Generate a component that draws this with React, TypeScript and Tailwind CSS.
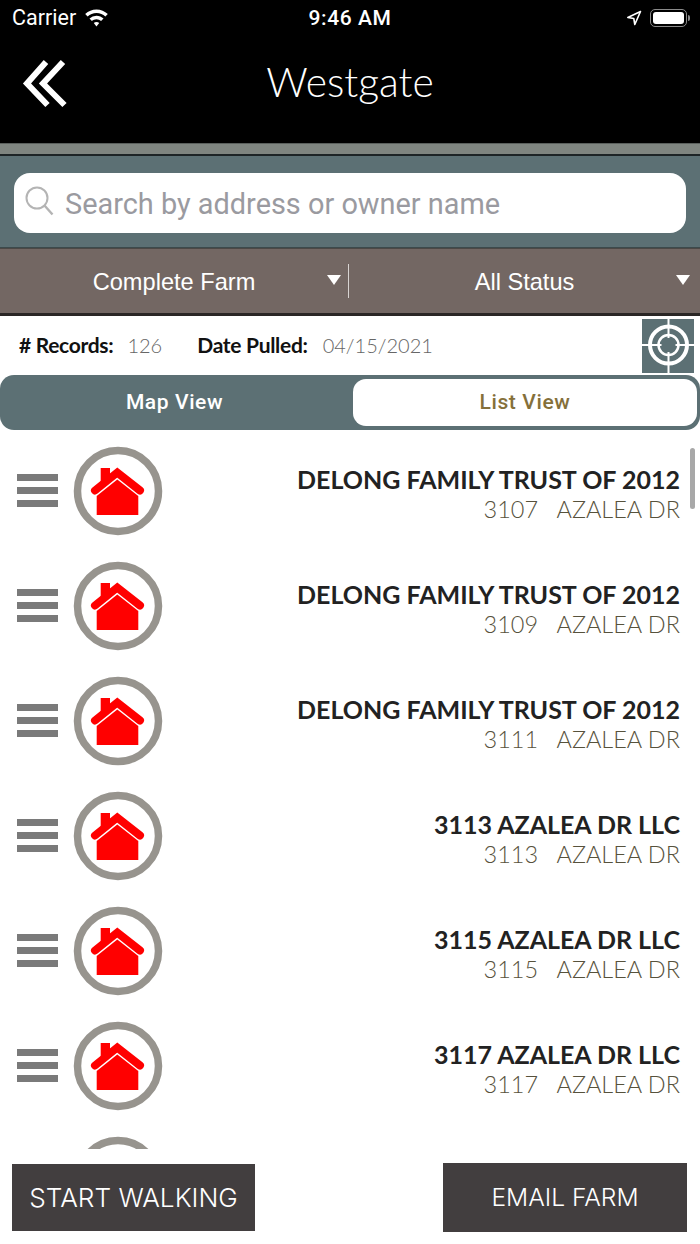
const rows = [
  { name: "DELONG FAMILY TRUST OF 2012", num: "3107" },
  { name: "DELONG FAMILY TRUST OF 2012", num: "3109" },
  { name: "DELONG FAMILY TRUST OF 2012", num: "3111" },
  { name: "3113 AZALEA DR LLC", num: "3113" },
  { name: "3115 AZALEA DR LLC", num: "3115" },
  { name: "3117 AZALEA DR LLC", num: "3117" },
  { name: "", num: "" },
];

function HouseBadge() {
  return (
    <svg width="90" height="90" viewBox="0 0 90 90" className="shrink-0 blur-[0.4px]">
      <circle cx="45" cy="45" r="40.500" fill="#fff" stroke="#97948e" strokeWidth="7.500" />
      <rect x="27.700" y="22" width="9.300" height="14" fill="#ff0000" />
      <polyline points="22,44.500 44.300,26.500 67,44.500" fill="none" stroke="#ff0000" strokeWidth="8" strokeLinecap="round" strokeLinejoin="miter" />
      <polygon points="23.700,50 44.300,33.500 65.300,50 65.300,69 23.700,69" fill="#ff0000" />
    </svg>
  );
}

function Row({ name, num }: { name: string; num: string }) {
  return (
    <div className="h-[115px] shrink-0 flex items-center pl-[17px] pr-5">
      <div className="w-[41px] flex flex-col gap-[6px] shrink-0">
        <div className="h-[7px] bg-[#7a7a7a]" />
        <div className="h-[7px] bg-[#7a7a7a]" />
        <div className="h-[7px] bg-[#7a7a7a]" />
      </div>
      <div className="ml-[15px]">
        <HouseBadge />
      </div>
      {name && (
        <div className="flex-1 pt-[7px] text-right font-['Lato',sans-serif] leading-[30px]">
          <div className="font-bold text-[25px] text-[#222222]">{name}</div>
          <div className="font-light text-[23.500px] text-[#57523c] whitespace-pre">{num}{"   "}AZALEA DR</div>
        </div>
      )}
    </div>
  );
}

export default function App() {
  return (
    <div className="w-[700px] h-[1244px] bg-white flex flex-col overflow-hidden font-['Roboto',sans-serif]">
      {/* Status bar + title */}
      <header className="h-[143px] bg-black text-white shrink-0 flex flex-col">
        <div className="h-[36px] pl-3 pr-[10px] flex items-center justify-between relative">
          <div className="flex items-center gap-[8px] text-[21.500px] leading-none">
            Carrier
            <svg width="25" height="18" viewBox="0 0 24 18" fill="#fff">
              <path d="M12 .5c4.300 0 8.300 1.700 11.300 4.600l-2.400 2.500A12.700 12.700 0 0 0 12 4c-3.400 0-6.500 1.300-8.900 3.600L.7 5.100A16.200 16.200 0 0 1 12 .5z" />
              <path d="M12 6.800c2.700 0 5.200 1.100 7 2.800l-2.400 2.500A6.600 6.600 0 0 0 12 10.200c-1.800 0-3.400.7-4.600 1.900L5 9.600a10 10 0 0 1 7-2.800z" />
              <path d="M12 13c1.100 0 2 .4 2.700 1.100L12 17.500l-2.700-3.400c.7-.7 1.600-1.100 2.700-1.100z" />
            </svg>
          </div>
          <div className="absolute left-0 right-0 top-[5px] text-center text-[21px] font-medium leading-[26px] tracking-[0.6px]">9:46 AM</div>
          <div className="flex items-center gap-[8px]">
            <svg width="16" height="16" viewBox="0 0 16 16" fill="none" stroke="#fff" strokeWidth="1.600">
              <path d="M14.500 1.500 1.800 7.500l6 1 1 6z" strokeLinejoin="round" />
            </svg>
            <div className="flex items-center">
              <div className="w-[37px] h-[18px] rounded-[5px] border border-[#8a8a8a] p-[2px]">
                <div className="w-full h-full rounded-[3px] bg-white" />
              </div>
              <div className="w-[2px] h-[6px] ml-[1px] bg-[#8a8a8a] rounded-r-sm" />
            </div>
          </div>
        </div>
        <div className="flex-1 relative flex items-start justify-center">
          <svg width="50" height="56" viewBox="0 0 50 56" className="absolute left-[20px] top-[20px]" fill="none" stroke="#fff" strokeWidth="6" strokeLinejoin="miter">
            <polyline points="26,6 7,27.500 27.500,49" />
            <polyline points="43,6 23,27.500 44.500,49" />
          </svg>
          <div className="font-['Lato',sans-serif] font-light text-[40.800px] leading-[46px] mt-[23px]">Westgate</div>
        </div>
      </header>

      <div className="h-[11px] bg-[#7f8580] border-t border-[#5a5f5c] shrink-0" />
      <div className="h-[2px] bg-[#1d2426] shrink-0" />

      {/* Search */}
      <div className="h-[92px] bg-[#5c7074] shrink-0 px-[14px] flex items-center border-b border-[#3c4a4c]">
        <div className="w-full h-[60px] mt-[3px] bg-white rounded-[16px] flex items-center pl-[9px] gap-[10px]">
          <svg width="32" height="32" viewBox="0 0 32 32" fill="none" stroke="#b4b4b4" className="shrink-0 -translate-y-[2px]">
            <circle cx="14" cy="13" r="10.500" strokeWidth="2" />
            <path d="M21.500 20.500 29.500 29.500" strokeWidth="2.400" />
          </svg>
          <span className="text-[28.900px] text-[#9a9aa0] leading-none pt-[2px]">Search by address or owner name</span>
        </div>
      </div>

      {/* Filters */}
      <div className="h-[68px] bg-[#736763] shrink-0 flex items-center border-t border-[#4d4845] border-b-[3px] border-b-[#2a2625]">
        <div className="w-[349px] h-[34px] flex items-center justify-center relative border-r border-[#d8d4d2] font-['Liberation_Sans',sans-serif] text-[23.600px] text-white">
          <span className="pt-[3px]">Complete Farm</span>
          <span className="absolute right-[7px] top-[11px] w-0 h-0 border-x-[7px] border-x-transparent border-t-[10px] border-t-white" />
        </div>
        <div className="flex-1 h-[34px] flex items-center justify-center relative font-['Liberation_Sans',sans-serif] text-[23.600px] text-white">
          <span className="pt-[3px]">All Status</span>
          <span className="absolute right-[10px] top-[11px] w-0 h-0 border-x-[7px] border-x-transparent border-t-[10px] border-t-white" />
        </div>
      </div>

      {/* Record summary */}
      <div className="h-[59px] shrink-0 flex items-center pl-[19px] pr-[6px] font-['Lato',sans-serif]">
        <span className="font-bold text-[21px] text-[#111] -translate-y-[1px] tracking-[-0.300px]"># Records:</span>
        <span className="ml-[14px] font-light text-[20px] text-[#666] -translate-y-[1px]">126</span>
        <span className="ml-[35px] font-bold text-[21px] text-[#111] -translate-y-[1px] tracking-[-0.300px]">Date Pulled:</span>
        <span className="ml-[15px] font-light text-[20px] text-[#666] -translate-y-[1px]">04/15/2021</span>
        <div className="ml-auto w-[52px] h-[54px] bg-[#5c7074]">
          <svg width="52" height="54" viewBox="0 0 52 54" fill="none" stroke="#fff">
            <circle cx="26.500" cy="26" r="18.500" strokeWidth="4" />
            <circle cx="26.500" cy="26" r="10" strokeWidth="2.500" />
            <path d="M26.500 0v19M26.500 33v21M0 26h19.500M33.500 26h18.500" strokeWidth="2" />
          </svg>
        </div>
      </div>

      {/* View tabs */}
      <div className="h-[55px] shrink-0 bg-[#5c7074] rounded-[14px] flex items-center pr-[3px] text-[21px] font-medium tracking-[0.6px]">
        <div className="w-[353px] text-center text-white -translate-x-[2px]">Map View</div>
        <div className="flex-1 h-[47px] bg-white rounded-[13px] flex items-center justify-center text-[#85703a]">List View</div>
      </div>

      {/* Records list */}
      <div className="relative h-[719px] shrink-0 overflow-hidden pt-[3px]">
        {rows.map((r, i) => (
          <Row key={i} name={r.name} num={r.num} />
        ))}
        <div className="absolute right-[5px] top-[18px] w-[5px] h-[61px] rounded-full bg-[#a8a8a8]" />
      </div>

      {/* Actions */}
      <div className="flex-1 flex items-start justify-between pl-[12px] pr-[13px] font-['Inter',sans-serif] font-light text-[26.200px] text-white">
        <div className="w-[243px] h-[67px] mt-[15px] bg-[#423e3f] flex items-center justify-center">START WALKING</div>
        <div className="w-[244px] h-[69px] mt-[14px] bg-[#423e3f] flex items-center justify-center text-[24.600px]">EMAIL FARM</div>
      </div>
    </div>
  );
}
